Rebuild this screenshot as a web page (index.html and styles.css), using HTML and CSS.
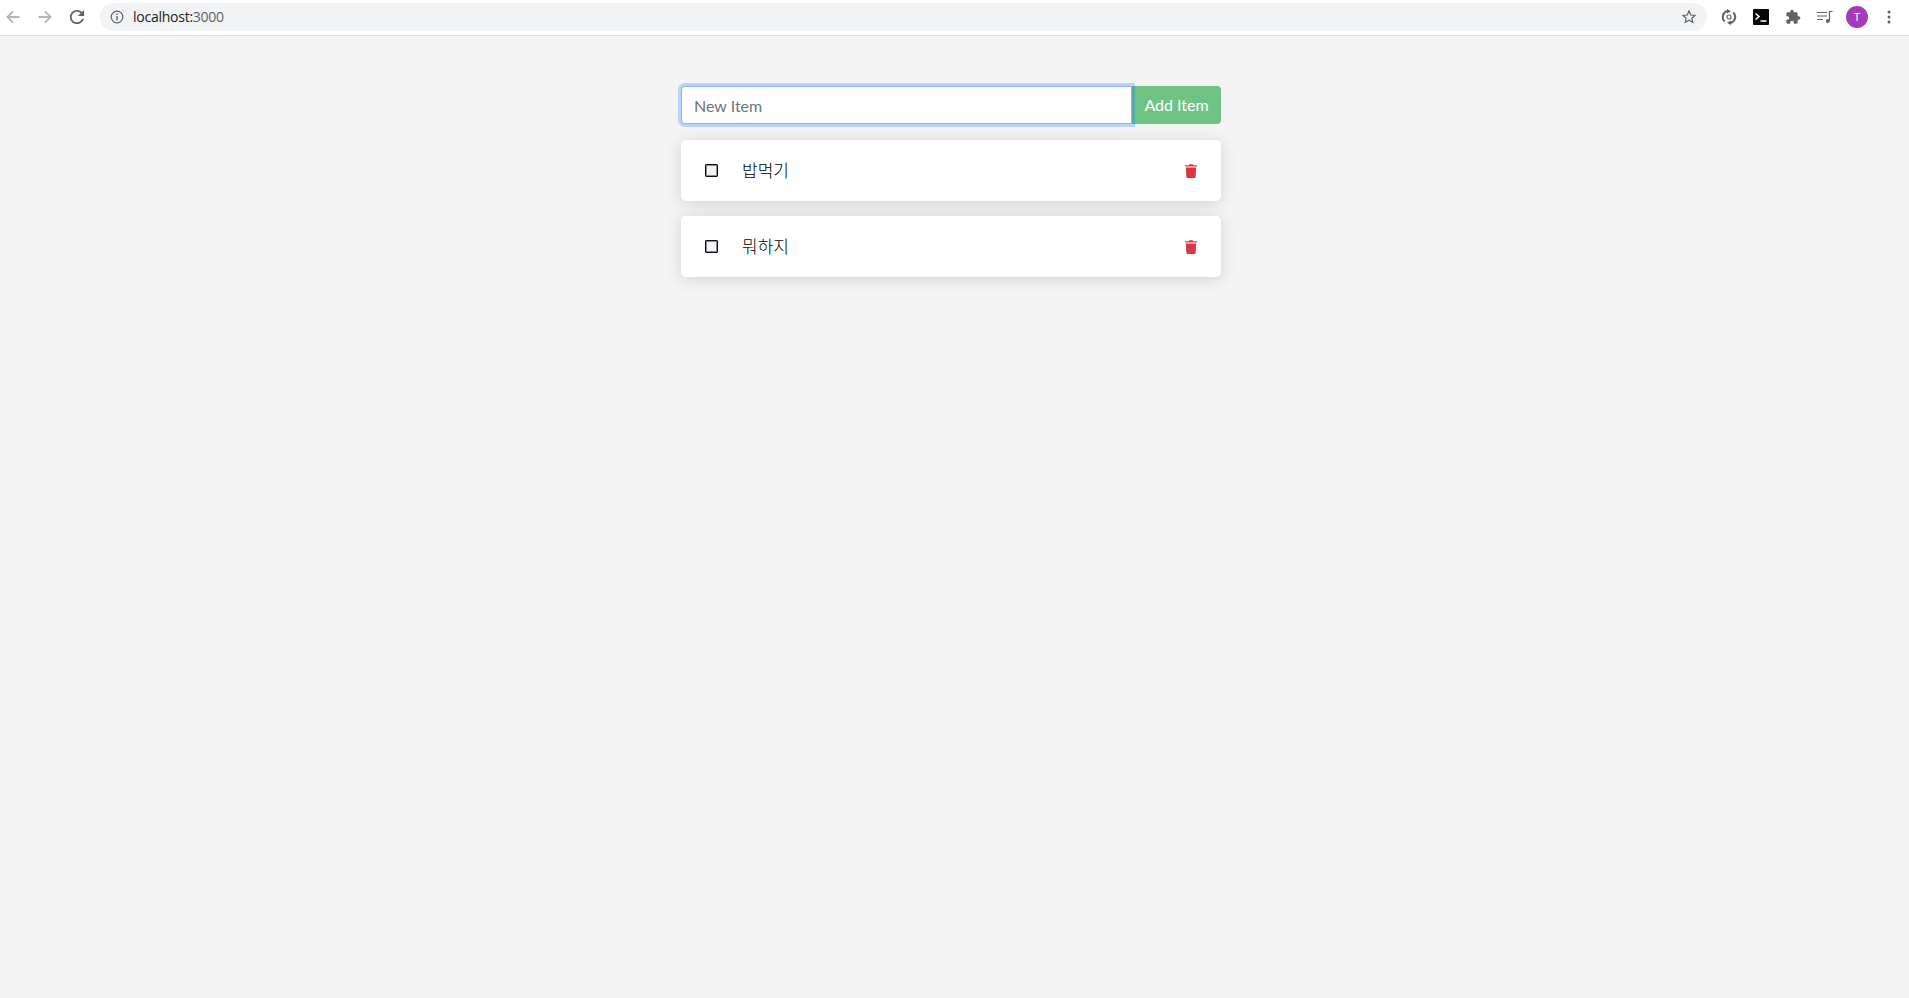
FILE: index.html
```html
<!DOCTYPE html>
<html lang="ko">
<head>
<meta charset="utf-8">
<title>Todo</title>
<link rel="stylesheet" href="styles.css">
</head>
<body>
<header class="toolbar">
  <svg class="tb-icon nav-first" viewBox="0 0 16 16"><path class="line-muted" d="M14.500 8H2.800M8 2.400 2.400 8 8 13.600"/></svg>
  <svg class="tb-icon nav-next" viewBox="0 0 16 16"><path class="line-muted" d="M1.500 8h11.700M8 2.400 13.600 8 8 13.600"/></svg>
  <svg class="tb-icon nav-next" viewBox="3 3 18 18"><path class="fill-dark" d="M17.650 6.350C16.200 4.900 14.210 4 12 4c-4.420 0-7.990 3.580-7.990 8s3.570 8 7.990 8c3.730 0 6.840-2.550 7.730-6h-2.080c-.82 2.330-3.040 4-5.650 4-3.310 0-6-2.690-6-6s2.690-6 6-6c1.660 0 3.140.69 4.220 1.780L13 11h7V4l-2.350 2.350z"/></svg>
  <div class="omnibox">
    <svg class="info" viewBox="0 0 14 14"><circle class="line-thin" cx="7" cy="7" r="5.800"/><path class="fill-dark" d="M6.300 6h1.400v4.200H6.300zM6.300 3.600h1.400V5H6.300z"/></svg>
    <span class="url"><span class="host">localhost:</span><span class="port">3000</span></span>
    <svg class="star" viewBox="0 0 16 16"><path class="line-thin" d="M8 2l1.800 4 4.200.4-3.200 2.800 1 4.200L8 11.200l-3.800 2.200 1-4.200L2 6.400l4.200-.4z"/></svg>
  </div>
  <div class="extensions">
    <svg class="ext" viewBox="0 0 16 16"><path class="line-heavy" d="M3.700 12.500A6.200 6.200 0 0 1 6.500 2M12.300 3.500A6.200 6.200 0 0 1 9.500 14"/><path class="fill-dark" d="M6 0l4 2.300L6 4.600zM10 11.400 6 13.700 10 16z"/><circle class="line-thin" cx="8" cy="8" r="2"/></svg>
    <span class="terminal"><svg class="term-glyph" viewBox="0 0 16 16"><path class="line-white" d="M2.500 4.500 6 7.500 2.500 10.500M7.500 12h6"/></svg></span>
    <svg class="ext" viewBox="0 0 24 24"><path class="fill-grey" d="M20.500 11H19V7c0-1.100-.9-2-2-2h-4V3.500C13 2.120 11.880 1 10.500 1S8 2.120 8 3.500V5H4c-1.100 0-1.990.9-1.990 2v3.800H3.500c1.490 0 2.700 1.210 2.700 2.700s-1.210 2.700-2.700 2.700H2V20c0 1.100.9 2 2 2h3.800v-1.500c0-1.490 1.210-2.700 2.700-2.700 1.490 0 2.700 1.210 2.700 2.700V22H17c1.100 0 2-.9 2-2v-4h1.500c1.380 0 2.500-1.120 2.500-2.500S21.880 11 20.500 11z"/></svg>
    <svg class="ext" viewBox="0 0 16 16"><path class="line-thin" d="M0 3.500h10M0 7h10M0 10.500h6M12.500 12V2.500H15.500"/><circle class="fill-dark" cx="10.800" cy="12" r="2"/></svg>
    <span class="avatar">T</span>
    <svg class="ext" viewBox="0 0 16 16"><circle class="fill-grey" cx="8" cy="3" r="1.500"/><circle class="fill-grey" cx="8" cy="8" r="1.500"/><circle class="fill-grey" cx="8" cy="13" r="1.500"/></svg>
  </div>
</header>
<div class="page">
<main class="app">
  <form class="add-form">
    <input class="new-item" type="text" placeholder="New Item" autocomplete="off">
    <button class="add-btn" type="button">Add Item</button>
  </form>
  <ul class="items">
    <li class="item">
      <span class="check"></span>
      <span class="label">밥먹기</span>
      <svg class="trash" viewBox="0 0 12 14"><path d="M4.300.3h3.400l.5.9H11.500a.5.500 0 0 1 .5.500v.8H0v-.8a.500.500 0 0 1 .5-.5h3.300zM.8 3.400h10.400l-.6 9.600a1 1 0 0 1-1 1H2.400a1 1 0 0 1-1-1z"/></svg>
    </li>
    <li class="item">
      <span class="check"></span>
      <span class="label">뭐하지</span>
      <svg class="trash" viewBox="0 0 12 14"><path d="M4.300.3h3.400l.5.9H11.500a.5.500 0 0 1 .5.500v.8H0v-.8a.500.500 0 0 1 .5-.5h3.300zM.8 3.400h10.400l-.6 9.600a1 1 0 0 1-1 1H2.400a1 1 0 0 1-1-1z"/></svg>
    </li>
  </ul>
</main>
</div>
</body>
</html>
```
FILE: styles.css
```css
* { box-sizing: border-box; }
html, body { margin: 0; height: 100%; }
body {
  background: #f4f4f4;
  font-family: Lato, "Noto Sans CJK KR", sans-serif;
  overflow: hidden;
}
.toolbar {
  display: flex;
  align-items: center;
  height: 36px;
  padding: 0 12px 1px 5px;
  background: #fff;
  border-bottom: 1px solid #dcdee0;
}
.tb-icon { width: 16px; height: 16px; flex: none; }
.nav-next { margin-left: 16px; }
.omnibox {
  display: flex;
  align-items: center;
  flex: 1;
  height: 28px;
  margin-left: 15px;
  padding: 0 10px 0 10px;
  background: #f1f3f4;
  border-radius: 14px;
}
.info { width: 14px; height: 14px; flex: none; }
.url {
  flex: 1;
  margin-left: 9px;
  padding-bottom: 1px;
  font: 14px "Open Sans", sans-serif;
  letter-spacing: -.25px;
}
.host { color: #202124; }
.port { color: #5f6368; }
.star { width: 16px; height: 16px; flex: none; }
.extensions { display: flex; align-items: center; gap: 16px; margin-left: 14px; }
.ext { width: 16px; height: 16px; flex: none; }
.terminal {
  display: flex;
  width: 16px;
  height: 16px;
  background: #07080c;
  border-radius: 1px;
}
.term-glyph { width: 16px; height: 16px; }
.avatar {
  display: flex;
  align-items: center;
  justify-content: center;
  width: 22px;
  height: 22px;
  margin: 0 -3px;
  border-radius: 50%;
  background: #a23cba;
  color: #fff;
  font: 11px Roboto, sans-serif;
}
.line-muted { fill: none; stroke: #b4b6b9; stroke-width: 1.800; }
.line-dark { fill: none; stroke: #5f6368; stroke-width: 1.800; }
.line-heavy { fill: none; stroke: #5f6368; stroke-width: 2; }
.line-thin { fill: none; stroke: #5f6368; stroke-width: 1.200; }
.line-white { fill: none; stroke: #fff; stroke-width: 1.500; }
.fill-dark { fill: #5f6368; }
.fill-grey { fill: #5f6368; }
.page { padding: 50px 7px 0 0; }
.app { width: 540px; margin: 0 auto; }
.add-form { display: flex; height: 38px; }
.new-item {
  flex: 1;
  min-width: 0;
  height: 38px;
  padding: 6px 12px;
  background: #fff;
  border: 1px solid #86b7fe;
  border-radius: 4px 0 0 4px;
  outline: 0;
  box-shadow: 0 0 0 3px rgba(13, 110, 253, .25);
  color: #212529;
  font: 16px Lato, sans-serif;
  position: relative;
  z-index: 1;
}
.new-item::placeholder { color: #6c757d; opacity: 1; }
.add-btn {
  width: 89px;
  height: 38px;
  padding: 0 0 2px;
  background: #6fc385;
  border: 0;
  border-radius: 0 4px 4px 0;
  color: #fff;
  font: 16px Lato, sans-serif;
}
.items { margin: 16px 0 0; padding: 0; list-style: none; }
.item {
  display: flex;
  align-items: center;
  height: 61px;
  margin-bottom: 15px;
  padding: 0 24px;
  background: #fff;
  border-radius: 5px;
  box-shadow: 0 2px 16px rgba(0, 0, 0, .14);
}
.check {
  width: 13px;
  height: 13px;
  flex: none;
  background: #f4f4f4;
  border: 1px solid #0c0c14;
  border-radius: 1px;
  box-shadow: inset 0 0 0 1px #8a8a90;
}
.label {
  flex: 1;
  margin-left: 24px;
  padding-bottom: 3px;
  color: #000;
  font: 300 17px "Noto Sans CJK KR", sans-serif;
}
.trash { width: 12px; height: 14px; flex: none; fill: #dc3545; }
```
